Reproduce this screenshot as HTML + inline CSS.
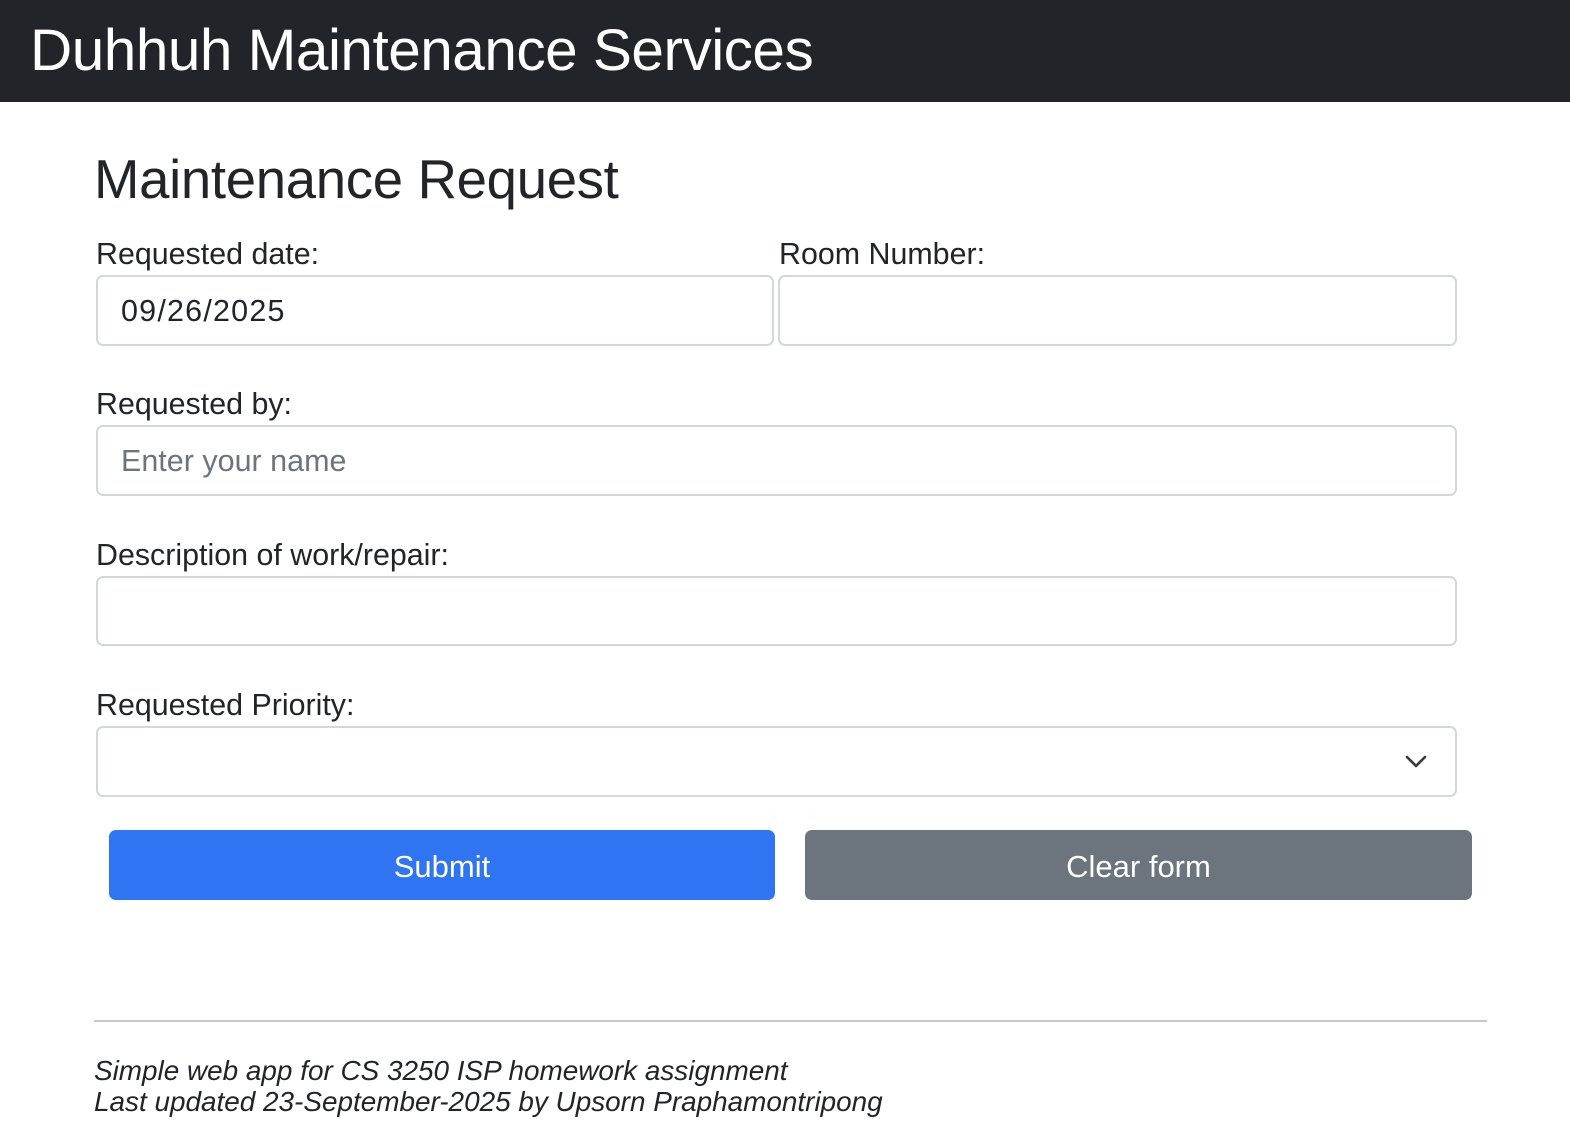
<!DOCTYPE html>
<html><head><meta charset="utf-8"><style>
*{box-sizing:border-box;margin:0;padding:0}
body{width:1570px;height:1146px;background:#fff;font-family:"Liberation Sans",sans-serif;color:#212529;position:relative;overflow:hidden}
.hdr{position:absolute;left:0;top:0;width:1570px;height:102px;background:#212529}
.hdr div{position:absolute;left:30px;top:16px;font-size:58.5px;color:#fff;line-height:70px;letter-spacing:-0.5px}
.t{position:absolute;white-space:nowrap}
.h1{left:94px;top:148px;font-size:54.5px;line-height:64px;letter-spacing:-0.3px}
.lbl{font-size:30.4px;line-height:34px}
.inp{position:absolute;border:2px solid #d3d7dc;border-radius:7px;background:#fff;font-size:30.5px;line-height:34px;padding:17px 0 0 23px}
.btn{position:absolute;border-radius:7px;color:#fff;font-size:31px;text-align:center;line-height:73px}
.ft{left:94px;font-size:27.9px;font-style:italic;line-height:31px}
</style></head><body>
<div class="hdr"><div>Duhhuh Maintenance Services</div></div>
<div class="t h1">Maintenance Request</div>
<div class="t lbl" style="left:96px;top:237px">Requested date:</div>
<div class="t lbl" style="left:779px;top:237px">Room Number:</div>
<div class="inp" style="left:96px;top:275px;width:678px;height:71px;letter-spacing:1.2px">09/26/2025</div>
<div class="inp" style="left:778px;top:275px;width:679px;height:71px"></div>
<div class="t lbl" style="left:96px;top:387px">Requested by:</div>
<div class="inp" style="left:96px;top:425px;width:1361px;height:71px;color:#6c757d">Enter your name</div>
<div class="t lbl" style="left:96px;top:538px">Description of work/repair:</div>
<div class="inp" style="left:96px;top:576px;width:1361px;height:70px"></div>
<div class="t lbl" style="left:96px;top:688px">Requested Priority:</div>
<div class="inp" style="left:96px;top:726px;width:1361px;height:71px"></div>
<svg style="position:absolute;left:1404px;top:754px" width="24" height="16" viewBox="0 0 24 16"><path d="M3 3 L12 12 L21 3" fill="none" stroke="#343a40" stroke-width="2.6" stroke-linecap="round" stroke-linejoin="round"/></svg>
<div class="btn" style="left:109px;top:830px;width:666px;height:70px;background:#2f74f3">Submit</div>
<div class="btn" style="left:805px;top:830px;width:667px;height:70px;background:#6c757d">Clear form</div>
<div style="position:absolute;left:94px;top:1020px;width:1393px;height:2px;background:#c8c8c8"></div>
<div class="t ft" style="top:1055px">Simple web app for CS 3250 ISP homework assignment</div>
<div class="t ft" style="top:1086px">Last updated 23-September-2025 by Upsorn Praphamontripong</div>
</body></html>
